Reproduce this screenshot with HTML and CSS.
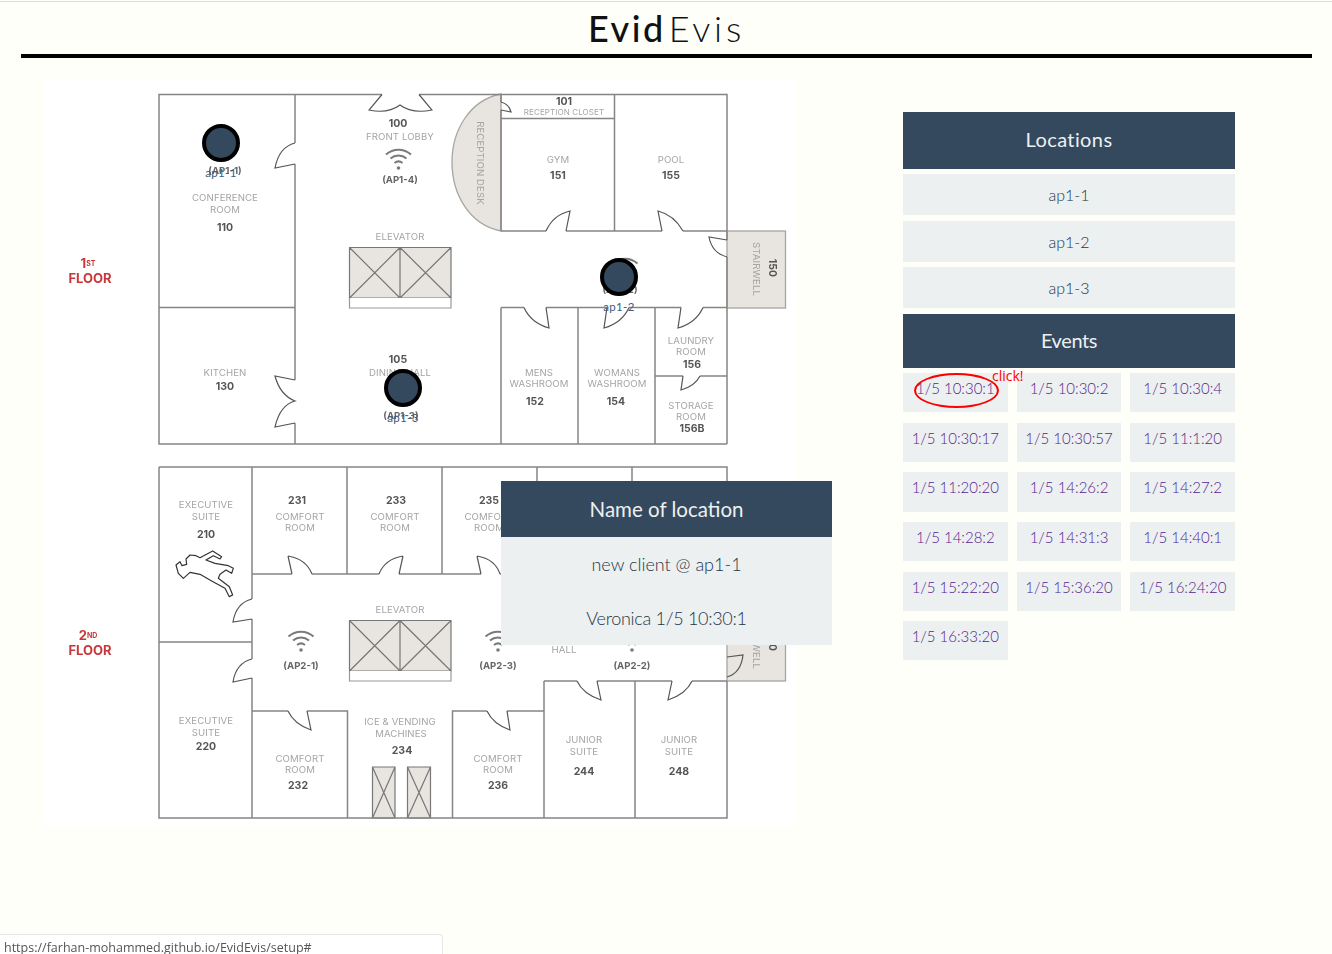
FILE: index.html
```html
<!DOCTYPE html>
<html lang="en">
<head>
<meta charset="utf-8">
<title>EvidEvis</title>
<link rel="stylesheet" href="styles.css">
</head>
<body>
<header class="masthead">
  <h1 class="brand"><span class="brand-strong">Evid</span><span class="brand-light">Evis</span></h1>
</header>
<main class="layout">
  <section class="map">
    <svg class="floorplan" viewBox="43 80 753 746" width="753" height="746" xmlns="http://www.w3.org/2000/svg">
      <defs>
        <g id="wifi">
          <path class="wifi-arc" d="M-12.5 -13.5A18.5 18.5 0 0 1 12.5 -13.5M-8 -9.6A12.5 12.5 0 0 1 8 -9.6M-4 -5A6.4 6.4 0 0 1 4 -5"/>
          <circle class="wifi-dot" r="1.8"/>
        </g>
      </defs>
      <path class="fixture" d="M501 94C470 100 452 130 452 162C452 195 470 225 501 231Z"/>
      <rect class="fixture" x="727" y="231" width="58.5" height="77"/>
      <rect class="fixture" x="727" y="604" width="58.5" height="77"/>
      <path class="fixture-line" d="M349.5 247.5H451V298H349.5ZM400 247.5V298M349.5 247.5L400 298M400 247.5L349.5 298M400 247.5L451 298M451 247.5L400 298"/>
      <path class="strip" d="M349.5 298V308H451V298"/>
      <path class="fixture-line" d="M349.5 620.5H451V671H349.5ZM400 620.5V671M349.5 620.5L400 671M400 620.5L349.5 671M400 620.5L451 671M451 620.5L400 671"/>
      <path class="strip" d="M349.5 671V681H451V671"/>
      <path class="fixture-line" d="M372.5 767H395V818H372.5ZM372.5 767L395 818M395 767L372.5 818M407.5 767H430.5V818H407.5ZM407.5 767L430.5 818M430.5 767L407.5 818"/>
      <path class="wall" d="M295 94.5H159V444H727M159 307.5H295M295 94.5V143M295 164V380M295 423V444M295 94.5H382M419 94.5H727V231M501 94V102M501 110V231M501 118.5H614.5M614.5 94.5V231M501 231H546M566 231H662M683 231H727M727 231V240M727 257V444M501 307.5H524M546 307.5H607M629 307.5H681M703 307.5H727M501 307.5V444M578 307.5V444M655 307.5V444M655 376H683M700 376H727"/>
      <path class="wall" d="M159 467H727V574M159 467V818H727V681M252 467V599M252 619V659M252 678V818M159 642H252M347 467V574M442 467V574M537 467V574M632 467V574M252 574H292M312 574H379M399 574H481M500 574H727M252 711H288M307 711H347.5V818M452.5 818V711H487M507 711H544M544 681V818M635 681V818M544 681H577M597 681H672M692 681H727"/>
      <path class="door" d="M382 94.5L369 110Q388 114 400 105Q412 114 432 110L419 94.5M295 143Q279 147 275 168L295 164M501 102Q509 104 511 112L501 110M546 231Q553 215 570 211L566 231M683 231Q674 215 658 211L662 231M727 240L709 237Q712 253 727 257M524 307.5Q531 323 549 328L546 307.5M629 307.5Q622 323 604 328L607 307.5M703 307.5Q696 323 678 328L681 307.5M700 376Q695 386 681 390L683 376M295 380L275 376Q280 395 295 401Q280 405 275 427L295 423"/>
      <path class="door" d="M288 556Q306 559 312 574M292 574L288 556M403 556Q385 559 379 574M399 574L403 556M477 556Q495 559 500 574M481 574L477 556M252 599Q236 603 233 622L252 619M252 659Q236 663 233 682L252 678M288 711Q294 724 311 730L307 711M487 711Q493 724 510 730L507 711M577 681Q583 694 601 700L597 681M692 681Q686 694 668 700L672 681M727 677Q741 673 743 655L727 657"/>
      <path class="outline" transform="translate(170 545) scale(.3333)" d="M18 60L30 50L36 62L50 58L48 42L60 30L78 32L90 38L128 18L155 35L150 42L130 32L108 45L135 55L175 62L190 70L185 85L168 75L150 88L145 100L178 125L188 150L178 155L165 130L125 108L90 88L60 82L40 100L25 85Z"/>

      <use href="#wifi" x="398.5" y="168"/>
      <use href="#wifi" x="221" y="160"/>
      <use href="#wifi" x="625" y="277"/>
      <use href="#wifi" x="403" y="400"/>
      <use href="#wifi" x="301" y="650"/>
      <use href="#wifi" x="498" y="650"/>
      <use href="#wifi" x="632" y="650"/>

      <text class="floor" x="88" y="268">1<tspan class="floor-sup" dy="-2.5">ST</tspan></text>
      <text class="floor" x="90" y="283">FLOOR</text>
      <text class="floor" x="88" y="640">2<tspan class="floor-sup" dy="-2.5">ND</tspan></text>
      <text class="floor" x="90" y="655">FLOOR</text>

      <text class="num" x="398" y="127">100</text>
      <text class="lbl" x="400" y="140">FRONT LOBBY</text>
      <text class="ap" x="400" y="183">(AP1-4)</text>
      <text class="ap" x="225" y="174">(AP1-1)</text>
      <text class="lbl" x="225" y="201">CONFERENCE</text>
      <text class="lbl" x="225" y="213">ROOM</text>
      <text class="num" x="225" y="231">110</text>
      <text class="lbl" x="400" y="240">ELEVATOR</text>
      <text class="num" x="564" y="105">101</text>
      <text class="lbl lbl-sm" x="564" y="115">RECEPTION CLOSET</text>
      <text class="lbl" transform="translate(477 163) rotate(90)">RECEPTION DESK</text>
      <text class="lbl" x="558" y="163">GYM</text>
      <text class="num" x="558" y="179">151</text>
      <text class="lbl" x="671" y="163">POOL</text>
      <text class="num" x="671" y="179">155</text>
      <text class="num" transform="translate(769 268) rotate(90)">150</text>
      <text class="lbl" transform="translate(753 269) rotate(90)">STAIRWELL</text>
      <text class="ap" x="620" y="293">(AP1-2)</text>
      <text class="lbl" x="225" y="376">KITCHEN</text>
      <text class="num" x="225" y="390">130</text>
      <text class="num" x="398" y="363">105</text>
      <text class="lbl" x="400" y="376">DINING HALL</text>
      <text class="ap" x="401" y="419">(AP1-3)</text>
      <text class="lbl" x="539" y="376">MENS</text>
      <text class="lbl" x="539" y="387">WASHROOM</text>
      <text class="num" x="535" y="405">152</text>
      <text class="lbl" x="617" y="376">WOMANS</text>
      <text class="lbl" x="617" y="387">WASHROOM</text>
      <text class="num" x="616" y="405">154</text>
      <text class="lbl" x="691" y="344">LAUNDRY</text>
      <text class="lbl" x="691" y="355">ROOM</text>
      <text class="num" x="692" y="368">156</text>
      <text class="lbl" x="691" y="409">STORAGE</text>
      <text class="lbl" x="691" y="420">ROOM</text>
      <text class="num" x="692" y="432">156B</text>

      <text class="lbl" x="206" y="508">EXECUTIVE</text>
      <text class="lbl" x="206" y="520">SUITE</text>
      <text class="num" x="206" y="538">210</text>
      <text class="num" x="297" y="504">231</text>
      <text class="lbl" x="300" y="520">COMFORT</text>
      <text class="lbl" x="300" y="531">ROOM</text>
      <text class="num" x="396" y="504">233</text>
      <text class="lbl" x="395" y="520">COMFORT</text>
      <text class="lbl" x="395" y="531">ROOM</text>
      <text class="num" x="489" y="504">235</text>
      <text class="lbl" x="489" y="520">COMFORT</text>
      <text class="lbl" x="489" y="531">ROOM</text>
      <text class="lbl" x="400" y="613">ELEVATOR</text>
      <text class="ap" x="301" y="669">(AP2-1)</text>
      <text class="ap" x="498" y="669">(AP2-3)</text>
      <text class="ap" x="632" y="669">(AP2-2)</text>
      <text class="lbl" x="564" y="653">HALL</text>
      <text class="num" transform="translate(769 642) rotate(90)">150</text>
      <text class="lbl" transform="translate(753 642) rotate(90)">STAIRWELL</text>
      <text class="lbl" x="206" y="724">EXECUTIVE</text>
      <text class="lbl" x="206" y="736">SUITE</text>
      <text class="num" x="206" y="750">220</text>
      <text class="lbl" x="300" y="762">COMFORT</text>
      <text class="lbl" x="300" y="773">ROOM</text>
      <text class="num" x="298" y="789">232</text>
      <text class="lbl" x="400" y="725">ICE &amp; VENDING</text>
      <text class="lbl" x="401" y="737">MACHINES</text>
      <text class="num" x="402" y="754">234</text>
      <text class="lbl" x="498" y="762">COMFORT</text>
      <text class="lbl" x="498" y="773">ROOM</text>
      <text class="num" x="498" y="789">236</text>
      <text class="lbl" x="584" y="743">JUNIOR</text>
      <text class="lbl" x="584" y="755">SUITE</text>
      <text class="num" x="584" y="775">244</text>
      <text class="lbl" x="679" y="743">JUNIOR</text>
      <text class="lbl" x="679" y="755">SUITE</text>
      <text class="num" x="679" y="775">248</text>
    </svg>

    <div class="pin pin-one"><span class="pin-dot"></span><span class="pin-label">ap1-1</span></div>
    <div class="pin pin-two"><span class="pin-dot"></span><span class="pin-label">ap1-2</span></div>
    <div class="pin pin-three"><span class="pin-dot"></span><span class="pin-label">ap1-3</span></div>

    <div class="popup">
      <div class="popup-title">Name of location</div>
      <div class="popup-row">new client @ ap1-1</div>
      <div class="popup-row popup-row-tight">Veronica 1/5 10:30:1</div>
    </div>
  </section>

  <aside class="side">
    <div class="side-head side-head-tall">Locations</div>
    <a class="loc">ap1-1</a>
    <a class="loc">ap1-2</a>
    <a class="loc">ap1-3</a>
    <div class="side-head side-head-tight">Events</div>
    <div class="events">
      <a class="event event-marked">1/5 10:30:1<span class="ring"></span><span class="click-note">click!</span></a>
      <a class="event">1/5 10:30:2</a>
      <a class="event">1/5 10:30:4</a>
      <a class="event">1/5 10:30:17</a>
      <a class="event">1/5 10:30:57</a>
      <a class="event">1/5 11:1:20</a>
      <a class="event">1/5 11:20:20</a>
      <a class="event">1/5 14:26:2</a>
      <a class="event">1/5 14:27:2</a>
      <a class="event">1/5 14:28:2</a>
      <a class="event">1/5 14:31:3</a>
      <a class="event">1/5 14:40:1</a>
      <a class="event">1/5 15:22:20</a>
      <a class="event">1/5 15:36:20</a>
      <a class="event">1/5 16:24:20</a>
      <a class="event">1/5 16:33:20</a>
    </div>
  </aside>
</main>
<div class="status">https://farhan-mohammed.github.io/EvidEvis/setup#</div>
</body>
</html>
```

FILE: styles.css
```css
* { box-sizing: border-box; }

html, body { height: 100%; }

body {
  margin: 0;
  padding-top: 1px;
  background: #fffffa;
  color: #34495e;
  font-family: "Lato", "Liberation Sans", sans-serif;
  overflow: hidden;
}

body::before {
  content: "";
  display: block;
  height: 1px;
  background: #dddddd;
}

.masthead {
  margin: 0 20px 0 21px;
  height: 56px;
  border-bottom: 4px solid #000;
}

.brand {
  margin: 0;
  height: 52px;
  display: flex;
  justify-content: center;
  align-items: center;
  font-size: 36px;
  line-height: 50px;
  color: #111;
}

.brand-strong { font-weight: 500; letter-spacing: 2.5px; }
.brand-light { font-weight: 300; letter-spacing: 3.8px; margin-left: 3px; }

.layout {
  display: flex;
  align-items: flex-start;
  padding: 22px 0 0 43px;
}

.map {
  position: relative;
  flex: none;
  width: 753px;
  height: 746px;
  background: #fff;
}

.floorplan {
  display: block;
  filter: blur(0.45px);
  font-family: "Inter", "Liberation Sans", sans-serif;
}

.floorplan text { text-anchor: middle; }

.fixture { fill: #e8e4e0; stroke: #a8a5a2; stroke-width: 1.3; }
.fixture-line { fill: #e8e4e0; stroke: #777; stroke-width: 1.2; }
.strip { fill: #fff; stroke: #999; stroke-width: 1.2; }
.wall { fill: none; stroke: #858585; stroke-width: 1.5; }
.door { fill: none; stroke: #555; stroke-width: 1.2; }
.outline { fill: #fff; stroke: #333; stroke-width: 3.6; stroke-linejoin: round; }
.wifi-arc { fill: none; stroke: #7a7a7a; stroke-width: 2; }
.wifi-dot { fill: #7a7a7a; }

.lbl { font-size: 9.6px; fill: #a5a5a5; font-weight: 400; letter-spacing: 0.1px; }
.lbl-sm { font-size: 8px; }
.num { font-size: 10.5px; fill: #555; font-weight: 700; }
.ap { font-size: 9.6px; fill: #666; font-weight: 700; }
.floor { font-size: 13px; fill: #c8383a; font-weight: 700; }
.floor-sup { font-size: 7px; }

.pin {
  position: absolute;
  width: 60px;
  display: flex;
  flex-direction: column;
  align-items: center;
}

.pin-one { left: 148px; top: 44px; }
.pin-two { left: 546px; top: 178px; }
.pin-three { left: 330px; top: 289px; }

.pin-dot {
  width: 38px;
  height: 38px;
  border-radius: 50%;
  background: #34495e;
  border: 4px solid #000;
}

.pin-label {
  margin-top: 4px;
  font-size: 11.5px;
  line-height: 14px;
  color: #3e5a80;
  letter-spacing: 0.3px;
}

.popup {
  position: absolute;
  left: 458px;
  top: 401px;
  width: 331px;
  background: #ecf0f1;
  color: #243648;
  text-align: center;
}

.popup-title {
  height: 56px;
  line-height: 56px;
  background: #34495e;
  color: #ecf0f1;
  font-size: 20.5px;
}

.popup-row {
  height: 54px;
  line-height: 54px;
  font-size: 18px;
  font-weight: 300;
}

.popup-row-tight { letter-spacing: -0.3px; }

.side {
  flex: none;
  width: 332px;
  margin: 32px 0 0 107px;
  display: flex;
  flex-direction: column;
  gap: 5.5px;
  text-align: center;
}

.side-head {
  height: 54px;
  line-height: 52px;
  background: #34495e;
  color: #ecf0f1;
  font-size: 20px;
}

.side-head-tall { height: 56.8px; line-height: 55px; letter-spacing: 0.4px; }
.side-head-tight { letter-spacing: -0.4px; }

.loc {
  height: 41px;
  line-height: 41px;
  background: #ecf0f1;
  color: #243648;
  font-size: 16px;
  font-weight: 300;
}

.events {
  display: grid;
  grid-template-columns: repeat(3, 1fr);
  grid-auto-rows: 39.2px;
  column-gap: 9px;
  row-gap: 10.4px;
}

.event {
  position: relative;
  background: #ecf0f1;
  color: #55258f;
  font-size: 15px;
  font-weight: 300;
  line-height: 31px;
  white-space: nowrap;
}

.event-marked { z-index: 1; }

.ring {
  position: absolute;
  left: 11px;
  top: 0;
  width: 85px;
  height: 35px;
  border: 2px solid #f00;
  border-radius: 50%;
}

.click-note {
  position: absolute;
  left: 89px;
  top: -6px;
  font-family: "Open Sans", "Liberation Sans", sans-serif;
  font-size: 14px;
  font-weight: 400;
  line-height: 18px;
  color: #f00;
}

.status {
  position: fixed;
  left: 0;
  bottom: 0;
  width: 443px;
  height: 20px;
  padding: 5px 0 0 4px;
  background: #fff;
  border-top: 1px solid #e6e6e6;
  border-right: 1px solid #e6e6e6;
  border-top-right-radius: 4px;
  color: #555;
  font-family: "Open Sans", "Liberation Sans", sans-serif;
  font-size: 12.5px;
  line-height: 16px;
  white-space: nowrap;
}
```
